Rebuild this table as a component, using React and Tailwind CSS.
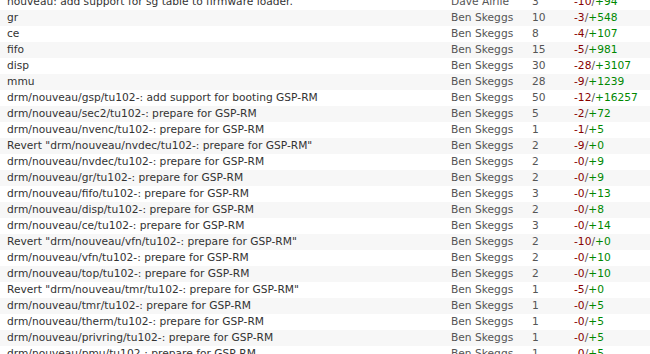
const rows = [
  ["nouveau: add support for sg table to firmware loader.", "Dave Airlie", "3", "10", "94"],
  ["gr", "Ben Skeggs", "10", "3", "548"],
  ["ce", "Ben Skeggs", "8", "4", "107"],
  ["fifo", "Ben Skeggs", "15", "5", "981"],
  ["disp", "Ben Skeggs", "30", "28", "3107"],
  ["mmu", "Ben Skeggs", "28", "9", "1239"],
  ["drm/nouveau/gsp/tu102-: add support for booting GSP-RM", "Ben Skeggs", "50", "12", "16257"],
  ["drm/nouveau/sec2/tu102-: prepare for GSP-RM", "Ben Skeggs", "5", "2", "72"],
  ["drm/nouveau/nvenc/tu102-: prepare for GSP-RM", "Ben Skeggs", "1", "1", "5"],
  ["Revert \"drm/nouveau/nvdec/tu102-: prepare for GSP-RM\"", "Ben Skeggs", "2", "9", "0"],
  ["drm/nouveau/nvdec/tu102-: prepare for GSP-RM", "Ben Skeggs", "2", "0", "9"],
  ["drm/nouveau/gr/tu102-: prepare for GSP-RM", "Ben Skeggs", "2", "0", "9"],
  ["drm/nouveau/fifo/tu102-: prepare for GSP-RM", "Ben Skeggs", "3", "0", "13"],
  ["drm/nouveau/disp/tu102-: prepare for GSP-RM", "Ben Skeggs", "2", "0", "8"],
  ["drm/nouveau/ce/tu102-: prepare for GSP-RM", "Ben Skeggs", "3", "0", "14"],
  ["Revert \"drm/nouveau/vfn/tu102-: prepare for GSP-RM\"", "Ben Skeggs", "2", "10", "0"],
  ["drm/nouveau/vfn/tu102-: prepare for GSP-RM", "Ben Skeggs", "2", "0", "10"],
  ["drm/nouveau/top/tu102-: prepare for GSP-RM", "Ben Skeggs", "2", "0", "10"],
  ["Revert \"drm/nouveau/tmr/tu102-: prepare for GSP-RM\"", "Ben Skeggs", "1", "5", "0"],
  ["drm/nouveau/tmr/tu102-: prepare for GSP-RM", "Ben Skeggs", "1", "0", "5"],
  ["drm/nouveau/therm/tu102-: prepare for GSP-RM", "Ben Skeggs", "1", "0", "5"],
  ["drm/nouveau/privring/tu102-: prepare for GSP-RM", "Ben Skeggs", "1", "0", "5"],
  ["drm/nouveau/pmu/tu102-: prepare for GSP-RM", "Ben Skeggs", "1", "0", "5"],
];

export default function App() {
  return (
    <div
      className="w-[650px] h-[354px] overflow-hidden bg-white"
      style={{ fontFamily: '"DejaVu Sans", sans-serif' }}
    >
      <div className="mt-[-6px] flex flex-col">
        {rows.map((r, i) => (
          <div
            key={i}
            className={`flex h-[16px] items-center text-[10.67px] leading-[16px] whitespace-nowrap ${
              i % 2 === 1 ? "bg-[#f7f7f7]" : "bg-white"
            }`}
          >
            <div className="w-[451px] pl-[7px] text-[#333]">{r[0]}</div>
            <div className="w-[81px] text-[#555]">{r[1]}</div>
            <div className="w-[42px] text-[#555]">{r[2]}</div>
            <div className="flex-1">
              <span className="text-[#880000]">-{r[3]}</span>
              <span className="text-[#555]">/</span>
              <span className="text-[#008800]">+{r[4]}</span>
            </div>
          </div>
        ))}
      </div>
    </div>
  );
}
